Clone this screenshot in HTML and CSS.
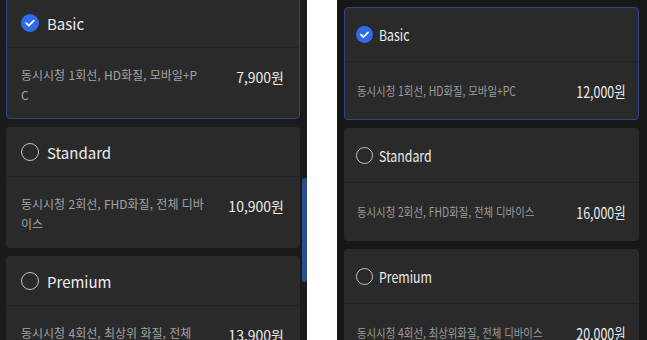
FILE: index.html
```html
<!DOCTYPE html>
<html lang="ko">
<head>
    <meta charset="UTF-8">
    <meta name="viewport" content="width=device-width, initial-scale=1.0">
    <title>Plan Select</title>
    <link rel="stylesheet" href="styles.css">
</head>
<body>
    <div class="shots">
        <!-- Left capture: wrapped descriptions -->
        <section class="phone phone-a">
            <div class="plan-list">
                <div class="plan selected">
                    <div class="plan-head">
                        <span class="radio checked">
                            <svg viewBox="0 0 18 18" width="18" height="18"><circle cx="9" cy="9" r="9" fill="#2f6bec"/><path d="M5.2 9.2l2.6 2.5 5-5" fill="none" stroke="#fff" stroke-width="1.8" stroke-linecap="round" stroke-linejoin="round"/></svg>
                        </span>
                        <span class="plan-name">Basic</span>
                    </div>
                    <div class="plan-body">
                        <p class="plan-desc">동시시청 1회선, HD화질, 모바일+PC</p>
                        <span class="plan-price">7,900원</span>
                    </div>
                </div>
                <div class="plan">
                    <div class="plan-head">
                        <span class="radio"></span>
                        <span class="plan-name">Standard</span>
                    </div>
                    <div class="plan-body">
                        <p class="plan-desc">동시시청 2회선, FHD화질, 전체 디바이스</p>
                        <span class="plan-price">10,900원</span>
                    </div>
                </div>
                <div class="plan">
                    <div class="plan-head">
                        <span class="radio"></span>
                        <span class="plan-name">Premium</span>
                    </div>
                    <div class="plan-body">
                        <p class="plan-desc">동시시청 4회선, 최상위 화질, 전체 <span class="nowrap">디바이스</span></p>
                        <span class="plan-price">13,900원</span>
                    </div>
                </div>
            </div>
            <div class="scrollbar"></div>
        </section>

        <!-- Right capture: single line descriptions, narrower text -->
        <section class="phone phone-b">
            <div class="plan-list">
                <div class="plan selected">
                    <div class="plan-head">
                        <span class="radio checked">
                            <svg viewBox="0 0 18 18" width="17" height="17"><circle cx="9" cy="9" r="9" fill="#2f6bec"/><path d="M5.2 9.2l2.6 2.5 5-5" fill="none" stroke="#fff" stroke-width="1.8" stroke-linecap="round" stroke-linejoin="round"/></svg>
                        </span>
                        <span class="plan-name">Basic</span>
                    </div>
                    <div class="plan-body">
                        <p class="plan-desc">동시시청 1회선, HD화질, 모바일+PC</p>
                        <span class="plan-price">12,000원</span>
                    </div>
                </div>
                <div class="plan">
                    <div class="plan-head">
                        <span class="radio"></span>
                        <span class="plan-name">Standard</span>
                    </div>
                    <div class="plan-body">
                        <p class="plan-desc">동시시청 2회선, FHD화질, 전체 디바이스</p>
                        <span class="plan-price">16,000원</span>
                    </div>
                </div>
                <div class="plan">
                    <div class="plan-head">
                        <span class="radio"></span>
                        <span class="plan-name">Premium</span>
                    </div>
                    <div class="plan-body">
                        <p class="plan-desc">동시시청 4회선, 최상위화질, 전체 디바이스</p>
                        <span class="plan-price">20,000원</span>
                    </div>
                </div>
            </div>
        </section>
    </div>
</body>
</html>
```

FILE: styles.css
```css
body {
    margin: 0;
    padding: 0;
    background-color: #ffffff;
    font-family: "Noto Sans CJK KR", "Noto Sans", sans-serif;
    height: 340px;
    overflow: hidden;
}
.shots {
    display: flex;
    gap: 30px;
}
.phone {
    position: relative;
    height: 340px;
    overflow: hidden;
    background-color: #1b1b1b;
    box-sizing: border-box;
}
.plan-list {
    display: flex;
    flex-direction: column;
    gap: 8px;
}
.plan {
    background-color: #2a2a2a;
    border: 1px solid transparent;
    border-radius: 4px;
}
.plan.selected {
    border-color: #2d4584;
}
.plan-head {
    display: flex;
    align-items: center;
    border-bottom: 1px solid #222222;
    box-sizing: border-box;
}
.radio {
    display: flex;
    flex-shrink: 0;
    box-sizing: border-box;
    border: 1.5px solid #c4c4c4;
    border-radius: 50%;
}
.radio.checked {
    border: none;
}
.plan-name {
    color: #ededed;
}
.plan-body {
    display: flex;
    justify-content: space-between;
    align-items: flex-start;
}
.plan-desc {
    margin: 0;
    color: #a3a3a3;
}
.plan-price {
    color: #ececec;
    white-space: nowrap;
}
.nowrap {
    white-space: nowrap;
}

/* Left capture */
.phone-a {
    width: 307px;
    padding: 0 7px 0 6px;
}
.phone-a .plan-list {
    margin-top: -2px;
}
.phone-a .plan-head {
    height: 49px;
    padding-left: 14px;
    gap: 8px;
}
.phone-a .radio {
    width: 18px;
    height: 18px;
}
.phone-a .plan-name {
    font-size: 15px;
}
.phone-a .plan-body {
    padding: 17px 15px 13px 14px;
}
.phone-a .plan-desc {
    width: 183.5px;
    font-size: 12px;
    line-height: 20px;
    word-break: break-all;
}
.phone-a .plan-price {
    font-size: 14px;
    line-height: 24px;
}
.scrollbar {
    position: absolute;
    right: 0;
    top: 178px;
    width: 5px;
    height: 104px;
    background-color: #2b4f8c;
    border-radius: 3px;
}

/* Right capture: the shot is squeezed sideways */
.phone-b {
    width: 310px;
    padding: 7px 8px 0 7px;
    background-color: #171717;
}
.phone-b .plan-head {
    height: 54px;
    padding-left: 11px;
    gap: 6px;
}
.phone-b .radio {
    width: 17px;
    height: 17px;
}
.phone-b .plan-name {
    font-size: 15px;
    transform: scaleX(0.82);
    transform-origin: left center;
}
.phone-b .plan-body {
    height: 57px;
    align-items: center;
    padding: 0 12px;
}
.phone-b .plan-desc {
    flex: 1;
    min-width: 0;
    font-size: 12.5px;
    color: #9c9c9c;
    white-space: nowrap;
    transform: scaleX(0.83);
    transform-origin: left center;
}
.phone-b .plan-price {
    flex-shrink: 0;
    font-size: 15.5px;
    transform: scaleX(0.8);
    transform-origin: right center;
}
```
